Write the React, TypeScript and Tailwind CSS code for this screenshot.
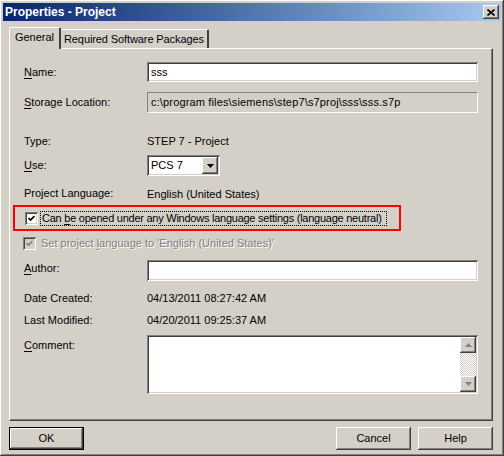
import React from "react";

// ── classic win32 bevels ──────────────────────────────────────────────────────

const RAISED =
  "shadow-[inset_-1px_-1px_#404040,inset_1px_1px_#ffffff,inset_-2px_-2px_#808080,inset_2px_2px_#d4d0c8]";
const SUNKEN =
  "shadow-[inset_1px_1px_#808080,inset_-1px_-1px_#ffffff,inset_2px_2px_#404040,inset_-2px_-2px_#d4d0c8]";

function U({ children }: { children: React.ReactNode }) {
  return <span className="underline underline-offset-[2px]">{children}</span>;
}

function Field({ value, className = "" }: { value?: string; className?: string }) {
  return (
    <div className={`flex-1 bg-white ${SUNKEN} flex items-center px-[4px] ${className}`}>
      {value}
    </div>
  );
}

function Check({ disabled = false }: { disabled?: boolean }) {
  return (
    <div
      className={`w-[13px] h-[13px] shrink-0 flex items-center justify-center ${
        disabled ? "bg-[#d4d0c8]" : "bg-white"
      } ${SUNKEN}`}
    >
      <svg width="7" height="7" viewBox="0 0 7 7">
        <path
          d="M0.5 3 L2.5 5 L6.5 1"
          fill="none"
          stroke={disabled ? "#808080" : "#000"}
          strokeWidth="1.7"
        />
      </svg>
    </div>
  );
}

function Button({ label, primary = false }: { label: string; primary?: boolean }) {
  return (
    <div
      className={`w-[75px] h-[23px] flex items-center justify-center ${
        primary ? "border border-black" : ""
      } ${RAISED}`}
    >
      {label}
    </div>
  );
}

function ScrollArrow({ up }: { up?: boolean }) {
  return (
    <div className={`w-[16px] h-[16px] bg-[#d4d0c8] flex items-center justify-center ${RAISED}`}>
      <svg width="7" height="4" viewBox="0 0 7 4">
        <path d={up ? "M3.5 0 L7 4 L0 4 Z" : "M0 0 L7 0 L3.5 4 Z"} fill="#808080" />
      </svg>
    </div>
  );
}

export default function App() {
  return (
    <div
      className={`w-[504px] h-[456px] bg-[#d4d0c8] p-[3px] flex flex-col text-[11px] text-black ${RAISED}`}
      style={{ fontFamily: '"Liberation Sans", Arial, sans-serif' }}
    >
      {/* Title bar */}
      <div className="h-[18px] bg-gradient-to-r from-[#0a246a] to-[#a6caf0] flex items-center justify-between pl-[2px] pr-[2px]">
        <span className="text-white font-bold text-[12px]">Properties - Project</span>
        <div className={`w-[16px] h-[14px] bg-[#d4d0c8] flex items-center justify-center ${RAISED}`}>
          <svg width="8" height="7" viewBox="0 0 8 7">
            <path d="M0.5 0.5 L7.5 6.5 M7.5 0.5 L0.5 6.5" stroke="#000" strokeWidth="1.6" />
          </svg>
        </div>
      </div>

      <div className="flex-1 flex flex-col px-[6px] pt-[6px]">
        {/* Tabs */}
        <div className="flex items-end h-[21px] relative z-10">
          <div className="h-[22px] w-[52px] -mb-[1px] bg-[#d4d0c8] border-l border-t border-white border-r-2 border-r-[#404040] rounded-t-[2px] flex items-center justify-center pb-[2px]">
            General
          </div>
          <div className="h-[19px] px-[3px] border-t border-white border-r-2 border-r-[#404040] rounded-t-[2px] flex items-center tracking-[-0.1px]">
            Required Software Packages
          </div>
        </div>

        {/* Panel */}
        <div className="h-[373px] w-[484px] border-l border-t border-white border-r border-b border-r-[#404040] border-b-[#404040] shadow-[inset_-1px_-1px_#808080] flex flex-col pl-[14px] pr-[14px]">
          {/* Name */}
          <div className="mt-[13px] h-[20px] flex items-center">
            <div className="w-[123px] shrink-0">
              <U>N</U>ame:
            </div>
            <Field value="sss" className="h-[20px]" />
          </div>

          {/* Storage */}
          <div className="mt-[10px] h-[21px] flex items-center">
            <div className="w-[123px] shrink-0">
              <U>S</U>torage Location:
            </div>
            <div className="flex-1 h-[21px] border border-t-[#808080] border-l-[#808080] border-b-white border-r-white flex items-center px-[3px] tracking-[0.15px]">
              c:\program files\siemens\step7\s7proj\sss\sss.s7p
            </div>
          </div>

          {/* Type */}
          <div className="mt-[18px] h-[20px] flex items-center">
            <div className="w-[123px] shrink-0">Type:</div>
            <div>STEP 7 - Project</div>
          </div>

          {/* Use */}
          <div className="mt-[4px] h-[21px] flex items-center">
            <div className="w-[123px] shrink-0">
              <U>U</U>se:
            </div>
            <div className={`w-[73px] h-[21px] bg-white ${SUNKEN} flex items-center justify-between pl-[4px] pr-[2px]`}>
              <span>PCS 7</span>
              <div className={`w-[16px] h-[17px] bg-[#d4d0c8] flex items-center justify-center ${RAISED}`}>
                <svg width="7" height="4" viewBox="0 0 7 4">
                  <path d="M0 0 L7 0 L3.5 4 Z" fill="#000" />
                </svg>
              </div>
            </div>
          </div>

          {/* Project language */}
          <div className="mt-[8px] h-[18px] flex items-center">
            <div className="w-[123px] shrink-0">Project Language:</div>
            <div className="pt-[3px]">English (United States)</div>
          </div>

          {/* Language neutral (highlighted) */}
          <div className="mt-[3px] -ml-[11px] w-[388px] h-[26px] border-2 border-[#ff0000] flex items-center pl-[10px] gap-[2px]">
            <Check />
            <span className="w-[347px] whitespace-nowrap overflow-hidden border border-dotted border-black px-[1px] leading-[13px] tracking-[-0.25px]">
              Can <U>b</U>e opened under any Windows language settings (language neutral)
            </span>
          </div>

          {/* Disabled */}
          <div className="mt-[3px] h-[18px] flex items-center gap-[5px] -ml-[1px]">
            <Check disabled />
            <span className="text-[#808080] [text-shadow:1px_1px_#ffffff]">
              Set project <U>l</U>anguage to 'English (United States)'
            </span>
          </div>

          {/* Author */}
          <div className="mt-[8px] h-[21px] flex items-center">
            <div className="w-[123px] shrink-0 -mt-[4px]">
              <U>A</U>uthor:
            </div>
            <Field className="h-[21px]" />
          </div>

          {/* Dates */}
          <div className="mt-[8px] h-[18px] flex items-center">
            <div className="w-[123px] shrink-0">Date Created:</div>
            <div>04/13/2011 08:27:42 AM</div>
          </div>
          <div className="mt-[4px] h-[18px] flex items-center">
            <div className="w-[123px] shrink-0">Last Modified:</div>
            <div>04/20/2011 09:25:37 AM</div>
          </div>

          {/* Comment */}
          <div className="mt-[6px] flex">
            <div className="w-[123px] shrink-0 pt-[2px]">
              <U>C</U>omment:
            </div>
            <div className={`flex-1 h-[59px] bg-white ${SUNKEN} flex justify-end p-[2px]`}>
              <div className="w-[16px] flex flex-col bg-[repeating-conic-gradient(#d4d0c8_0_25%,#ffffff_0_50%)] bg-[length:2px_2px]">
                <ScrollArrow up />
                <div className="flex-1" />
                <ScrollArrow />
              </div>
            </div>
          </div>
        </div>

        {/* Buttons */}
        <div className="mt-[6px] flex justify-between pr-[2px]">
          <Button label="OK" primary />
          <div className="flex gap-[7px]">
            <Button label="Cancel" />
            <Button label="Help" />
          </div>
        </div>
      </div>
    </div>
  );
}
